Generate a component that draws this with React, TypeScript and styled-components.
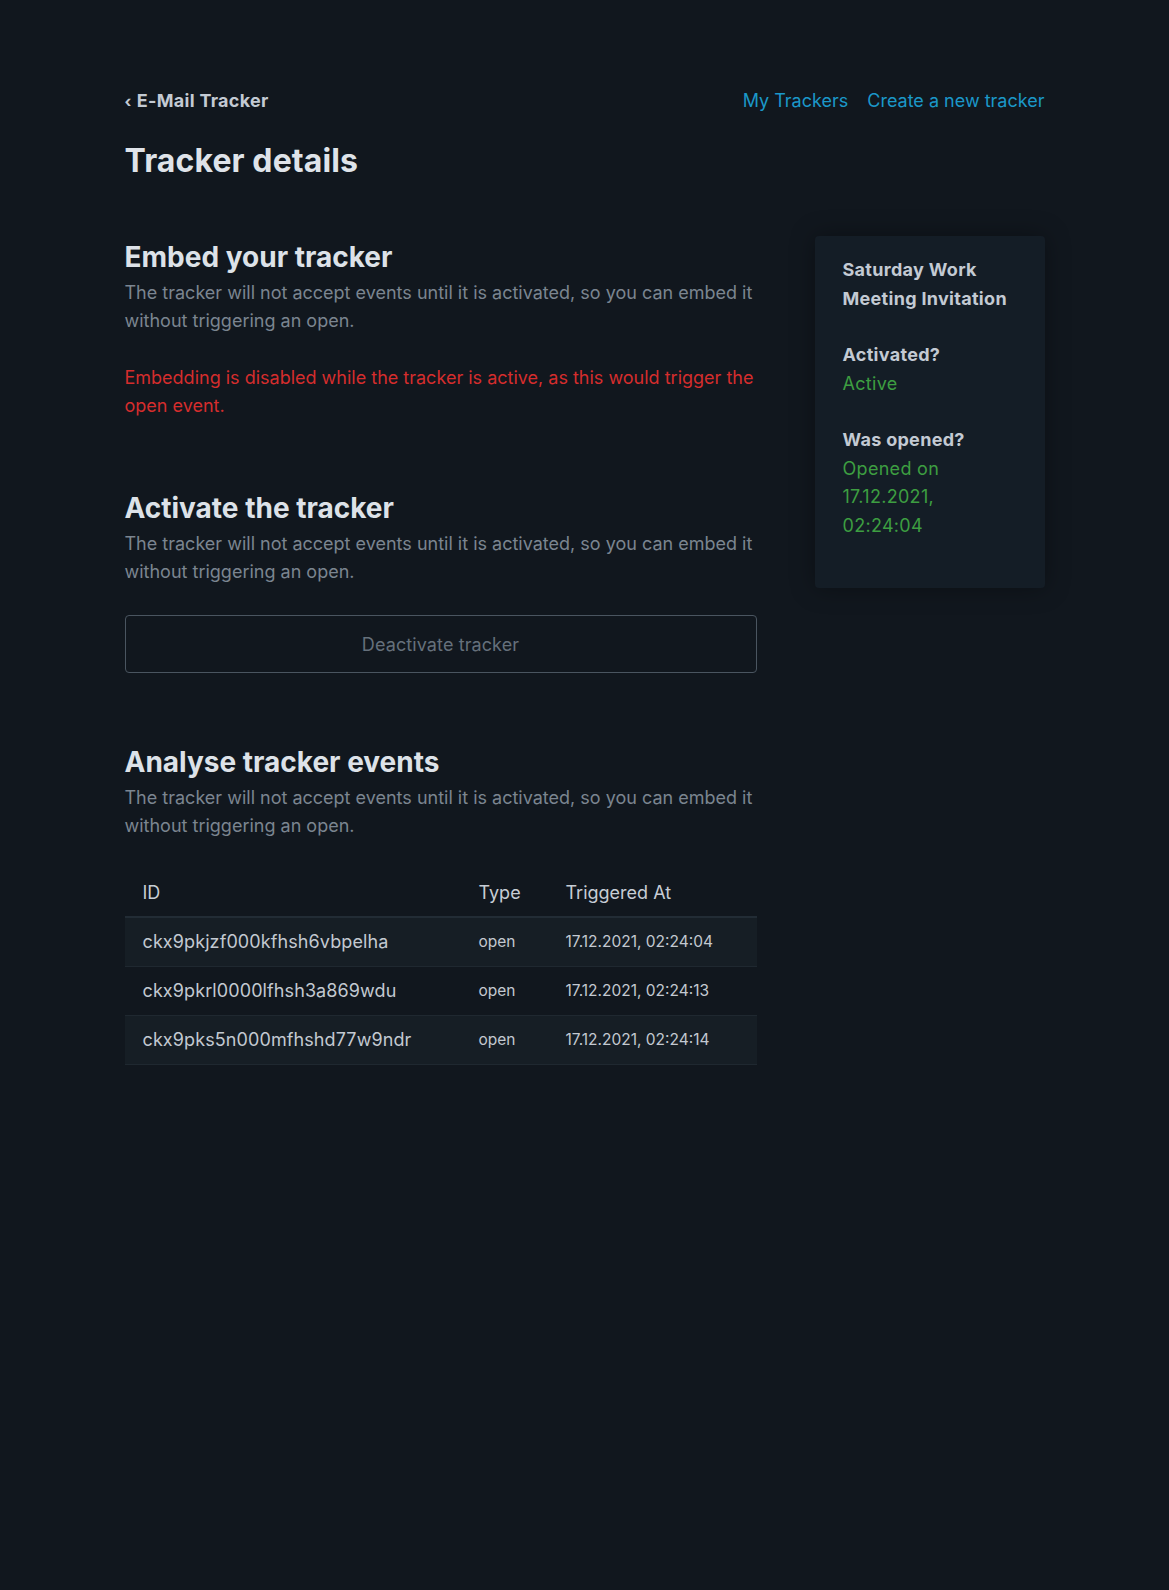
import { styled, createGlobalStyle } from "styled-components";

const GlobalStyle = createGlobalStyle`
  * {
    box-sizing: border-box;
  }
  html, body {
    margin: 0;
    padding: 0;
    background: #11171e;
  }
  body {
    font-family: Inter, "Noto Sans", "Liberation Sans", sans-serif;
    color: #dde2e8;
    min-height: 1590px;
  }
`;

type TrackerEvent = {
  id: string;
  type: string;
  triggeredAt: string;
};

const events: TrackerEvent[] = [
  { id: "ckx9pkjzf000kfhsh6vbpelha", type: "open", triggeredAt: "17.12.2021, 02:24:04" },
  { id: "ckx9pkrl0000lfhsh3a869wdu", type: "open", triggeredAt: "17.12.2021, 02:24:13" },
  { id: "ckx9pks5n000mfhshd77w9ndr", type: "open", triggeredAt: "17.12.2021, 02:24:14" },
];

const description =
  "The tracker will not accept events until it is activated, so you can embed it without triggering an open.";

const App = () => {
  return (
    <>
      <GlobalStyle />
      <Page>
        <Header>
          <Brand href="#">
            <Chevron>‹</Chevron>E-Mail Tracker
          </Brand>
          <Nav>
            <NavLink href="#">My Trackers</NavLink>
            <NavLink href="#">Create a new tracker</NavLink>
          </Nav>
        </Header>

        <PageTitle>Tracker details</PageTitle>

        <Layout>
          <Main>
            <Section>
              <SectionTitle>Embed your tracker</SectionTitle>
              <Text>{description}</Text>
              <Warning>
                Embedding is disabled while the tracker is active, as this would
                trigger the open event.
              </Warning>
            </Section>

            <Section>
              <SectionTitle>Activate the tracker</SectionTitle>
              <Text>{description}</Text>
              <OutlineButton>Deactivate tracker</OutlineButton>
            </Section>

            <Section $gapAbove={1}>
              <SectionTitle>Analyse tracker events</SectionTitle>
              <Text>{description}</Text>
              <Table>
                <thead>
                  <tr>
                    <Th>ID</Th>
                    <Th>Type</Th>
                    <Th>Triggered At</Th>
                  </tr>
                </thead>
                <tbody>
                  {events.map((ev) => (
                    <Row key={ev.id}>
                      <IdCell>{ev.id}</IdCell>
                      <Td>{ev.type}</Td>
                      <Td>{ev.triggeredAt}</Td>
                    </Row>
                  ))}
                </tbody>
              </Table>
            </Section>
          </Main>

          <Aside>
            <InfoCard>
              <InfoBlock>
                <InfoLabel>Saturday Work Meeting Invitation</InfoLabel>
              </InfoBlock>
              <InfoBlock>
                <InfoLabel>Activated?</InfoLabel>
                <InfoValue>Active</InfoValue>
              </InfoBlock>
              <InfoBlock>
                <InfoLabel>Was opened?</InfoLabel>
                <InfoValue>Opened on 17.12.2021, 02:24:04</InfoValue>
              </InfoBlock>
            </InfoCard>
          </Aside>
        </Layout>
      </Page>
    </>
  );
};

export default App;

const Page = styled.div`
  width: 920px;
  margin: 0 auto;
  padding-top: 86px;
`;

const Header = styled.header`
  display: flex;
  justify-content: space-between;
  align-items: center;
  height: 28px;
`;

const Brand = styled.a`
  display: flex;
  align-items: center;
  font-size: 18px;
  font-weight: 700;
  color: #c3cad3;
  text-decoration: none;
  letter-spacing: 0.3px;
`;

const Chevron = styled.span`
  font-size: 16px;
  margin-right: 5px;
  margin-top: 1px;
`;

const Nav = styled.nav`
  display: flex;
  gap: 19px;
`;

const NavLink = styled.a`
  font-size: 18px;
  color: #1b98c9;
  text-decoration: none;
`;

const PageTitle = styled.h1`
  margin: 27px 0 0;
  font-size: 32px;
  line-height: 40px;
  font-weight: 700;
  color: #dfe3e9;
  letter-spacing: 0.1px;
`;

const Layout = styled.div`
  display: grid;
  grid-template-columns: 632px 230px;
  column-gap: 58px;
  margin-top: 55px;
  align-items: start;
`;

const Main = styled.main`
  display: flex;
  flex-direction: column;
  gap: 67px;
`;

const Section = styled.section<{ $gapAbove?: number }>`
  display: flex;
  flex-direction: column;
  margin-top: ${(p) => p.$gapAbove ?? 0}px;
`;

const SectionTitle = styled.h2`
  margin: 4px 0 5px;
  font-size: 28px;
  line-height: 34px;
  font-weight: 700;
  color: #dde2e8;
  letter-spacing: 0;
`;

const Text = styled.p`
  margin: 0;
  font-size: 18px;
  line-height: 28px;
  color: #7b8590;
`;

const Warning = styled(Text)`
  margin-top: 29px;
  color: #d52d2d;
`;

const OutlineButton = styled.button`
  margin-top: 29px;
  height: 58px;
  width: 100%;
  background: transparent;
  border: 1px solid #4a5560;
  border-radius: 4px;
  font-family: inherit;
  font-size: 18px;
  letter-spacing: 0.1px;
  color: #65707b;
  cursor: not-allowed;
`;

const Table = styled.table`
  margin-top: 29px;
  width: 100%;
  border-collapse: collapse;
`;

const Th = styled.th`
  text-align: left;
  font-weight: 400;
  font-size: 18px;
  color: #c7cdd5;
  height: 48px;
  padding: 0 18px;
  border-bottom: 2px solid #222c35;

  &:first-child {
    width: 336px;
  }
  &:nth-child(2) {
    width: 87px;
  }
`;

const Row = styled.tr`
  height: 49px;
  border-bottom: 1px solid #1f2830;

  &:nth-child(odd) {
    background: #161e25;
  }
`;

const Td = styled.td`
  padding: 0 18px;
  font-size: 15.5px;
  color: #c3c9d1;
`;

const IdCell = styled(Td)`
  font-size: 18px;
  letter-spacing: 0.1px;
`;

const Aside = styled.aside``;

const InfoCard = styled.div`
  background: #141d26;
  border-radius: 4px;
  padding: 20px 30px 20px 28px;
  box-shadow: 0 0 24px rgba(0, 0, 0, 0.35);
`;

const InfoBlock = styled.div`
  margin-bottom: 28px;
  font-size: 18px;
  line-height: 28.5px;
  letter-spacing: 0.3px;
`;

const InfoLabel = styled.div`
  font-weight: 700;
  color: #c3cad3;
`;

const InfoValue = styled.div`
  color: #3d9e41;
`;
